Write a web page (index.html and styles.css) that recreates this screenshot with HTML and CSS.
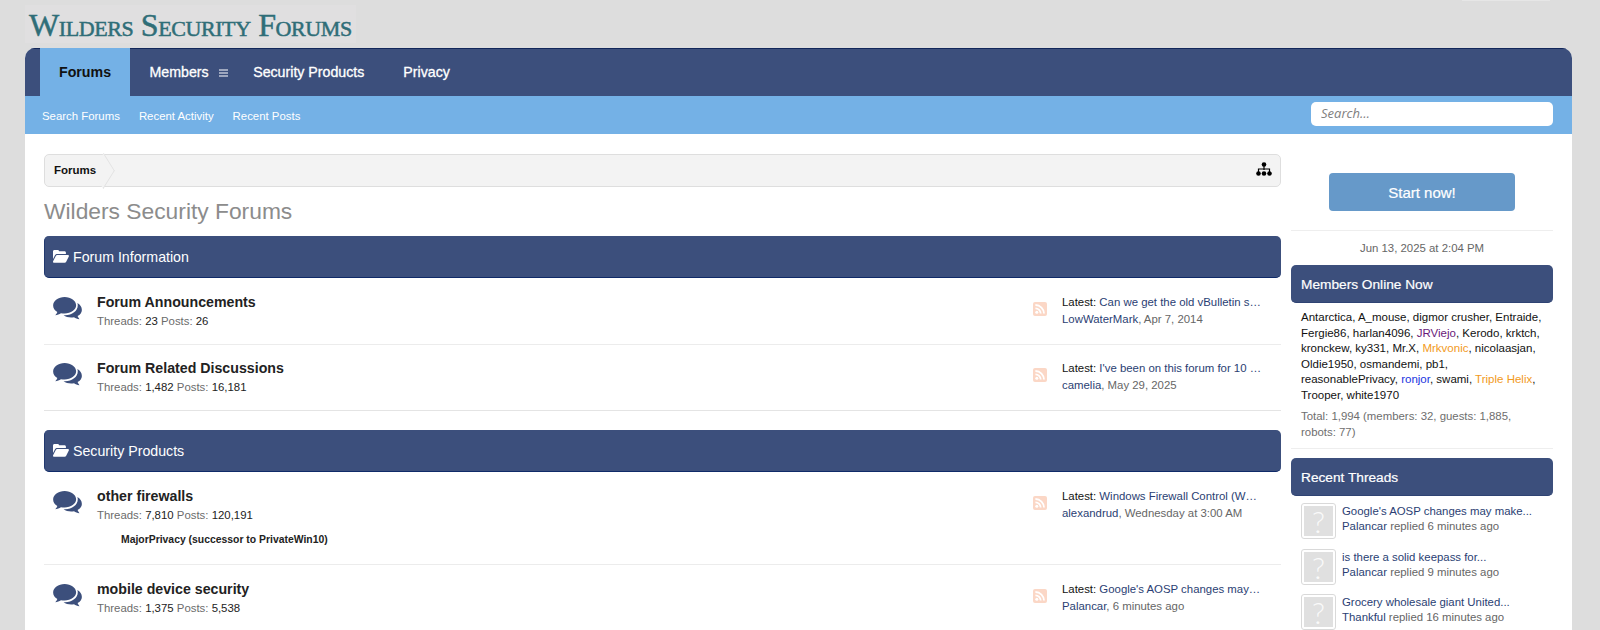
FILE: index.html
```html
<!DOCTYPE html>
<html lang="en">
<head>
<meta charset="utf-8">
<title>Wilders Security Forums</title>
<link rel="stylesheet" href="styles.css">
</head>
<body>
<svg class="defs" width="0" height="0" aria-hidden="true">
  <symbol id="i-comments" viewBox="0 0 30 24">
    <path fill="#3c4f7c" d="M12 0C5.4 0 0 3.900 0 8.800c0 2.800 1.700 5.200 4.400 6.800-.4 1.300-1.200 2.400-2.200 3.400 2.200-.2 4.300-1 6-2.100 1.200.3 2.500.4 3.800.4 6.600 0 12-3.900 12-8.600C24 3.900 18.600 0 12 0z"/>
    <path fill="#3c4f7c" d="M25.300 6.300c.3.800.4 1.700.4 2.600 0 5.600-5.800 9.900-13.300 10.200-.5 0-1 0-1.500 0 2.100 1.500 4.900 2.300 7.900 2.300 1 0 2-.1 3-.3 1.500 1 3.500 1.800 5.700 2-.9-1-1.600-2-2-3.200 2.900-1.500 4.500-3.900 4.500-6.400 0-3-1.800-5.500-4.700-7.200z"/>
  </symbol>
  <symbol id="i-folder" viewBox="0 0 16 13">
    <path fill="#fff" d="M0 11V1.500C0 .7.600 0 1.400 0h3.300c.8 0 1.300.6 1.400 1.300h5.400c.8 0 1.400.6 1.400 1.400V4H4.200C3.300 4 2.500 4.500 2 5.200L0 9z"/>
    <path fill="#fff" d="M4.200 5H15c.8 0 1.200.8.800 1.400l-2.600 5.300c-.3.600-.9 1-1.600 1H1c-.8 0-1.200-.8-.9-1.400l2.700-5.300C3.100 5.400 3.600 5 4.200 5z"/>
  </symbol>
  <symbol id="i-rss" viewBox="0 0 14 14">
    <rect width="14" height="14" rx="2" fill="#fbd7c6"/>
    <circle cx="3.800" cy="10.200" r="1.500" fill="#fff"/>
    <path d="M2.400 6.300a5.300 5.300 0 0 1 5.300 5.300M2.400 3a8.600 8.600 0 0 1 8.600 8.600" fill="none" stroke="#fff" stroke-width="1.800"/>
  </symbol>
</svg>

<header class="logo-row">
  <a class="logo">Wilders Security Forums</a>
  <span class="top-mark"></span>
</header>

<div class="wrapper">
  <nav class="nav-main">
    <a class="tab tab-active">Forums</a>
    <a class="tab tab-members">Members
      <svg class="burger" viewBox="0 0 9 8" width="9" height="8"><path d="M0 1h9M0 4h9M0 7h9" stroke="#fff" stroke-width="1.200"/></svg>
    </a>
    <a class="tab">Security Products</a>
    <a class="tab">Privacy</a>
  </nav>
  <nav class="nav-sub">
    <div class="sub-links">
      <a>Search Forums</a>
      <a>Recent Activity</a>
      <a>Recent Posts</a>
    </div>
    <input class="search" type="text" placeholder="Search…">
  </nav>

  <div class="content">
    <main class="main">
      <div class="crumbs">
        <span class="crumb">Forums</span>
        <svg class="sitemap" viewBox="0 0 16 14" width="16" height="14">
          <circle cx="8" cy="2.500" r="2.300"/>
          <path d="M8 4v4M2.500 10V7h11v3" fill="none" stroke="#000" stroke-width="1.200"/>
          <circle cx="2.500" cy="11.500" r="2.300"/><circle cx="8" cy="11.500" r="2.300"/><circle cx="13.500" cy="11.500" r="2.300"/>
        </svg>
      </div>
      <h1 class="page-title">Wilders Security Forums</h1>

      <section class="category">
        <h2 class="cat-head"><svg class="folder" width="16" height="13"><use href="#i-folder"/></svg>Forum Information</h2>
        <div class="row row-first">
          <svg class="chat" width="29" height="23"><use href="#i-comments"/></svg>
          <div class="row-text">
            <h3>Forum Announcements</h3>
            <p class="stats">Threads: <b>23</b> Posts: <b>26</b></p>
          </div>
          <svg class="rss" width="14" height="14"><use href="#i-rss"/></svg>
          <div class="latest">
            <p class="trunc">Latest: <a>Can we get the old vBulletin s…</a></p>
            <p class="meta"><a>LowWaterMark</a>, Apr 7, 2014</p>
          </div>
        </div>
        <div class="row row-second">
          <svg class="chat" width="29" height="23"><use href="#i-comments"/></svg>
          <div class="row-text">
            <h3>Forum Related Discussions</h3>
            <p class="stats">Threads: <b>1,482</b> Posts: <b>16,181</b></p>
          </div>
          <svg class="rss" width="14" height="14"><use href="#i-rss"/></svg>
          <div class="latest">
            <p class="trunc">Latest: <a>I've been on this forum for 10 …</a></p>
            <p class="meta"><a>camelia</a>, May 29, 2025</p>
          </div>
        </div>
      </section>

      <section class="category">
        <h2 class="cat-head"><svg class="folder" width="16" height="13"><use href="#i-folder"/></svg>Security Products</h2>
        <div class="row row-tall">
          <svg class="chat" width="29" height="23"><use href="#i-comments"/></svg>
          <div class="row-text">
            <h3>other firewalls</h3>
            <p class="stats">Threads: <b>7,810</b> Posts: <b>120,191</b></p>
            <p class="subforum">MajorPrivacy (successor to PrivateWin10)</p>
          </div>
          <svg class="rss" width="14" height="14"><use href="#i-rss"/></svg>
          <div class="latest">
            <p class="trunc">Latest: <a>Windows Firewall Control (W…</a></p>
            <p class="meta"><a>alexandrud</a>, Wednesday at 3:00 AM</p>
          </div>
        </div>
        <div class="row">
          <svg class="chat" width="29" height="23"><use href="#i-comments"/></svg>
          <div class="row-text">
            <h3>mobile device security</h3>
            <p class="stats">Threads: <b>1,375</b> Posts: <b>5,538</b></p>
          </div>
          <svg class="rss" width="14" height="14"><use href="#i-rss"/></svg>
          <div class="latest">
            <p class="trunc">Latest: <a>Google's AOSP changes may…</a></p>
            <p class="meta"><a>Palancar</a>, 6 minutes ago</p>
          </div>
        </div>
      </section>
    </main>

    <aside class="side">
      <div class="side-cta"><a class="cta">Start now!</a></div>
      <p class="side-date">Jun 13, 2025 at 2:04 PM</p>

      <section class="side-block side-online">
        <h2 class="side-head">Members Online Now</h2>
        <p class="names">Antarctica, A_mouse, digmor crusher, Entraide,<br>Fergie86, harlan4096, <span class="purple">JRViejo</span>, Kerodo, krktch,<br>kronckew, ky331, Mr.X, <span class="orange">Mrkvonic</span>, nicolaasjan,<br>Oldie1950, osmandemi, pb1,<br>reasonablePrivacy, <span class="blue">ronjor</span>, swami, <span class="orange">Triple Helix</span>,<br>Trooper, white1970</p>
        <p class="totals">Total: 1,994 (members: 32, guests: 1,885, robots: 77)</p>
      </section>

      <section class="side-block">
        <h2 class="side-head">Recent Threads</h2>
        <ul class="threads">
          <li><span class="avatar"><span>?</span></span><div><a>Google's AOSP changes may make...</a><p><a>Palancar</a> replied 6 minutes ago</p></div></li>
          <li><span class="avatar"><span>?</span></span><div><a>is there a solid keepass for...</a><p><a>Palancar</a> replied 9 minutes ago</p></div></li>
          <li><span class="avatar"><span>?</span></span><div><a>Grocery wholesale giant United...</a><p><a>Thankful</a> replied 16 minutes ago</p></div></li>
        </ul>
      </section>
    </aside>
  </div>
</div>
</body>
</html>
```

FILE: styles.css
```css
* { box-sizing: border-box; }
html, body { margin: 0; padding: 0; height: 630px; overflow: hidden; }
body { background: #dddddd; font-family: "Liberation Sans", Arial, sans-serif; font-size: 11px; color: #222; }
h1, h2, h3, p, ul { margin: 0; padding: 0; }
.defs { position: absolute; }

.logo-row { height: 48px; padding: 5px 0 0 25px; position: relative; }
.logo {
  display: block; width: 331px; height: 38px; padding-left: 4px; background: #e0dfe0;
  font-family: "Liberation Serif", serif; font-variant: small-caps; font-size: 32px; line-height: 41px;
  letter-spacing: -0.42px; color: #2f6e78; white-space: nowrap; -webkit-text-stroke: 0.5px #2f6e78;
}
.top-mark { position: absolute; top: 0; left: 1462px; width: 88px; height: 1px; background: #e6e6e6; }

.wrapper { margin: 0 28px 0 25px; background: #fff; border-radius: 10px 10px 0 0; overflow: hidden; }

.nav-main { display: flex; height: 48px; padding-left: 15px; background: #3c4f7c; border-top: 1px solid #12275a; }
.tab { display: flex; align-items: center; padding: 0 19.500px; color: #fff; font-size: 14.200px; -webkit-text-stroke: 0.3px #fff; white-space: nowrap; margin-top: -1px; }
.tab-active { background: #74b1e6; color: #111; font-weight: bold; padding: 0 19px; -webkit-text-stroke: 0; }
.tab-members { padding-right: 6px; gap: 10px; }
.burger { margin-top: 2px; }

.nav-sub { display: flex; justify-content: space-between; align-items: center; height: 38px; padding: 0 19px 2px 17px; background: #74b1e6; }
.sub-links { display: flex; gap: 19px; color: #fff; font-size: 11.400px; padding-top: 3px; }
.search {
  width: 242px; height: 24px; border: 0; border-radius: 5px; background: #fff; padding: 0 10px 2px;
  font-family: "Open Sans", sans-serif; font-style: italic; font-size: 13px; color: #777;
}
.search::placeholder { color: #808080; opacity: 1; }

.content { display: flex; gap: 10px; padding: 20px 19px 0; }
.main { width: 1237px; flex: none; }
.side { width: 262px; flex: none; }

.crumbs { display: flex; justify-content: space-between; align-items: center; height: 33px; padding: 0 8px 2px 9px; background: #f3f3f3; border: 1px solid #dedede; border-radius: 5px; position: relative; }
.crumb { position: relative; z-index: 1; font-size: 11.500px; font-weight: bold; color: #111; }
.crumbs::after {
  content: ""; position: absolute; left: 46px; top: 3px; width: 24px; height: 25px;
  border-top: 1px solid #e0e0e0; border-right: 1px solid #e0e0e0; transform: scale(.62, 1) rotate(45deg); background: #f3f3f3;
}
.sitemap { fill: #000; margin-top: -2px; }

.page-title { margin: 9px 0 10px; font-size: 22.800px; line-height: 30px; font-weight: normal; color: #8c8c8c; }

.category { margin-bottom: 19px; }
.cat-head {
  display: flex; align-items: center; gap: 4px; height: 42px; padding: 0 8px; background: #3c4f7c;
  border-bottom: 1px solid #0f2a68; border-left: 1px solid #22396f; border-radius: 5px;
  color: #fff; font-size: 14.200px; font-weight: normal;
}
.folder { flex: none; margin-top: -1px; }

.row { display: flex; align-items: flex-start; height: 66px; padding-top: 16px; border-bottom: 1px solid #ececec; }
.row-first { height: 67px; }
.row-second { padding-top: 15px; }
.row:last-child { border-bottom-color: #e4e4e4; }
.row-tall { height: 93px; }
.chat { flex: none; margin: 3px 15px 0 9px; }
.row-text { flex: 1; }
.row-text h3 { font-size: 14.200px; line-height: 17px; font-weight: bold; color: #222; }
.stats { margin-top: 2px; font-size: 11.400px; line-height: 16px; color: #6b6b6b; }
.stats b { font-weight: normal; color: #222; }
.subforum { margin: 10px 0 0 24px; font-size: 10.400px; line-height: 14px; font-weight: bold; color: #222; }
.rss { flex: none; margin: 8px 15px 0 0; }
.latest { width: 200px; flex: none; margin-right: 19px; font-size: 11.400px; line-height: 17px; color: #111; }
.latest a { color: #2a3e73; }
.trunc { white-space: nowrap; overflow: hidden; }
.meta { color: #666; }

.side-cta { height: 77px; padding-top: 19px; display: flex; justify-content: center; align-items: flex-start; border-bottom: 1px solid #eeeeee; }
.cta { display: flex; align-items: center; justify-content: center; width: 186px; height: 38px; background: #6699c9; border-radius: 4px; color: #fff; font-size: 15px; -webkit-text-stroke: 0.2px #fff; }
.side-date { height: 34px; padding-top: 9px; text-align: center; font-size: 11.400px; line-height: 16px; color: #666; }
.side-head { display: flex; align-items: center; height: 38px; padding: 1px 10px 0; background: #3c4f7c; border-radius: 5px; border-bottom: 1px solid #2f4373; color: #fff; font-size: 13.700px; -webkit-text-stroke: 0.2px #fff; font-weight: normal; }
.side-block { margin-bottom: 9px; }
.side-online { padding-bottom: 8px; border-bottom: 1px solid #eeeeee; }
.names { margin-top: 7px; padding: 0 0 0 10px; font-size: 11.500px; line-height: 15.500px; color: #111; white-space: nowrap; }
.totals { margin-top: 6px; padding: 0 14px 0 10px; font-size: 11.400px; line-height: 15.500px; color: #6e6e6e; }
.purple { color: #6a1b7a; }
.orange { color: #f29a1c; }
.blue { color: #1a33e0; }

.threads { list-style: none; padding: 7px 10px 0; }
.threads li { display: flex; gap: 6px; height: 45.500px; }
.threads div { font-size: 11.400px; line-height: 15px; color: #666; padding-top: 1px; }
.threads a { color: #2a3e73; }
.avatar { flex: none; width: 35px; height: 36px; padding: 2px; background: #fff; border: 1px solid #d9d9d9; border-radius: 3px; }
.avatar span { display: flex; align-items: center; justify-content: center; width: 100%; height: 100%; background: #e0e0e0; font-family: Lato, "Liberation Sans", sans-serif; font-weight: 300; font-size: 30px; line-height: 28px; color: #fafafa; }
```
